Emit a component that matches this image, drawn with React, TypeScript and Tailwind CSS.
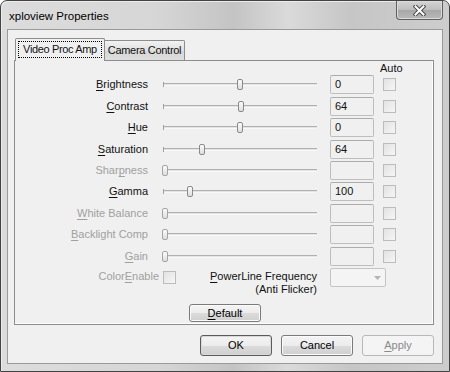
import React from "react";

type Row = { label: string; u: number; value: string; thumb: number; enabled: boolean; h: string };

const rows: Row[] = [
  { label: "Brightness", u: 0, value: "0", thumb: 77, enabled: true, h: "h-[21px]" },
  { label: "Contrast", u: 0, value: "64", thumb: 78, enabled: true, h: "h-[22px]" },
  { label: "Hue", u: 0, value: "0", thumb: 77, enabled: true, h: "h-[21px]" },
  { label: "Saturation", u: 0, value: "64", thumb: 39, enabled: true, h: "h-[22px]" },
  { label: "Sharpness", u: 4, value: "", thumb: 2, enabled: false, h: "h-[21px]" },
  { label: "Gamma", u: 0, value: "100", thumb: 27, enabled: true, h: "h-[21px]" },
  { label: "White Balance", u: 0, value: "", thumb: 2, enabled: false, h: "h-[22px]" },
  { label: "Backlight Comp", u: 0, value: "", thumb: 2, enabled: false, h: "h-[21px]" },
  { label: "Gain", u: 0, value: "", thumb: 2, enabled: false, h: "h-[22px]" },
];

function U({ text, i }: { text: string; i: number }) {
  return (
    <>
      {text.slice(0, i)}
      <span className="underline underline-offset-[2px]">{text[i]}</span>
      {text.slice(i + 1)}
    </>
  );
}

function Checkbox() {
  return (
    <div className="w-[13px] h-[13px] border border-[#bcbcbc] bg-[linear-gradient(135deg,#e2e2e2,#f6f6f6)] shrink-0" />
  );
}

function Slider({ thumb, enabled }: { thumb: number; enabled: boolean }) {
  return (
    <div className="relative w-[154px] h-[21px] shrink-0">
      <div className="absolute left-0 right-0 top-[9px] h-[3px] border-t border-[#b0b0b0] bg-[#e4e4e4] border-b border-b-[#f8f8f8]" />
      <div className="absolute left-0 top-[8px] w-[1px] h-[5px] bg-[#a0a0a0]" />
      <div
        className={
          "absolute top-[5px] w-[6px] h-[11px] rounded-[2px] border bg-[linear-gradient(to_bottom,#fbfbfb,#dedede)] " +
          (enabled ? "border-[#8a8a8a]" : "border-[#a4a4a4]")
        }
        style={{ left: thumb - 3 }}
      />
    </div>
  );
}

function WinButton({ children, primary, disabled, className = "" }: { children: React.ReactNode; primary?: boolean; disabled?: boolean; className?: string }) {
  return (
    <div
      className={
        "flex items-center justify-center rounded-[3px] border " +
        (disabled
          ? "border-[#b8b8b8] bg-[#f4f4f4] text-[#8a8a8a] "
          : primary
          ? "border-[#5c5c5c] bg-[linear-gradient(to_bottom,#f4f4f4_0%,#ececec_50%,#dcdcdc_51%,#cfcfcf_100%)] text-black shadow-[inset_0_0_0_1px_#d8d8d8] "
          : "border-[#7a7a7a] bg-[linear-gradient(to_bottom,#f4f4f4_0%,#ececec_50%,#dcdcdc_51%,#cfcfcf_100%)] text-black shadow-[inset_0_0_0_1px_#fbfbfb] ") +
        className
      }
    >
      {children}
    </div>
  );
}

export default function App() {
  return (
    <div
      className="w-[450px] h-[372px] overflow-hidden bg-white text-[11px] leading-[13px]"
      style={{ fontFamily: '"Liberation Sans", Arial, sans-serif' }}
    >
      <div className="w-[450px] h-[372px] flex flex-col rounded-t-[7px] border border-[#434343] bg-[linear-gradient(to_right,#dcdcdc_0%,#d6d6d6_35%,#c4c4c4_52%,#dadada_64%,#c6c6c6_78%,#cdcdcd_100%)] shadow-[inset_1px_1px_0_#ececec]">
        {/* title bar */}
        <div className="relative h-[28px] flex items-center pl-[8px] pt-[2px] shrink-0">
          <span className="text-[11.5px] text-black">xploview Properties</span>
          <div className="absolute right-[6px] top-0 w-[47px] h-[19px] rounded-b-[4px] border border-t-0 border-[#5f5f5f] bg-[linear-gradient(to_bottom,#d4d4d4_0%,#bdbdbd_50%,#a8a8a8_51%,#b8b8b8_100%)] shadow-[inset_0_0_0_1px_#dcdcdc] flex items-center justify-center">
            <svg width="13" height="11" viewBox="0 0 13 11">
              <path d="M2.5 1.5 L10.5 9.5 M10.5 1.5 L2.5 9.5" stroke="#4a4a4a" strokeWidth="4" strokeLinecap="square" />
              <path d="M2.5 1.5 L10.5 9.5 M10.5 1.5 L2.5 9.5" stroke="#ffffff" strokeWidth="2" strokeLinecap="square" />
            </svg>
          </div>
        </div>
        {/* client */}
        <div className="mx-[6px] mb-[7px] h-[335px] border border-[#9a9a9a] bg-[#f0f0f0] flex flex-col text-[#111]">
          {/* tabs */}
          <div className="pt-[8px] pl-[6px] pr-[8px] flex flex-col">
            <div className="flex items-end h-[22px] relative z-10">
              <div className="ml-[1px] w-[90px] h-[23px] -mb-[1px] border border-b-0 border-[#8d8d8d] rounded-t-[2px] bg-[#f0f0f0] flex items-start justify-center pt-[2px]">
                <div className="w-[84px] h-[17px] border border-dotted border-black flex items-center justify-center tracking-[-0.35px]">
                  Video Proc Amp
                </div>
              </div>
              <div className="w-[80px] h-[20px] border border-l-0 border-b-0 border-[#8d8d8d] rounded-tr-[2px] bg-[linear-gradient(to_bottom,#f2f2f2,#e0e0e0_50%,#d6d6d6_51%,#dedede)] flex items-center justify-center tracking-[-0.3px]">
                Camera Control
              </div>
            </div>
            {/* panel */}
            <div className="w-[420px] h-[265px] border border-[#8d8d8d] bg-[#f0f0f0] shadow-[inset_-1px_-1px_0_#ffffff] flex flex-col">
              <div className="h-[13px] pl-[365px] pt-[1px]">Auto</div>
              {rows.map((r) => (
                <div key={r.label} className={"flex items-center " + r.h}>
                  <div className={"w-[133px] text-right shrink-0 " + (r.enabled ? "text-[#111]" : "text-[#a0a0a0]")}>
                    <U text={r.label} i={r.u} />
                  </div>
                  <div className="ml-[15px]">
                    <Slider thumb={r.thumb} enabled={r.enabled} />
                  </div>
                  <div className="ml-[13px] w-[44px] h-[19px] rounded-[2px] border border-[#bdbdbd] border-t-[#acacac] bg-[#f0f0f0] pl-[4px] flex items-center shrink-0">
                    {r.value}
                  </div>
                  <div className="ml-[9px]">
                    <Checkbox />
                  </div>
                </div>
              ))}
              <div className="flex items-start mt-[1px]">
                <div className="w-[144px] text-right mt-[2px] text-[#a0a0a0] shrink-0">
                  <U text="ColorEnable" i={5} />
                </div>
                <div className="ml-[4px] mt-[3px]">
                  <Checkbox />
                </div>
                <div className="ml-[33px] w-[108px] text-right mt-[2px] leading-[13px] shrink-0">
                  <div>
                    <U text="PowerLine Frequency" i={0} />
                  </div>
                  <div>(Anti Flicker)</div>
                </div>
                <div className="ml-[13px] w-[56px] h-[19px] border border-[#c4c4c4] bg-[#f4f4f4] rounded-[2px] relative shrink-0">
                  <svg className="absolute right-[4px] top-[7px]" width="7" height="4" viewBox="0 0 7 4">
                    <path d="M0 0 L7 0 L3.5 4 Z" fill="#b4b4b4" />
                  </svg>
                </div>
              </div>
              <div className="mt-[8px] ml-[174px]">
                <WinButton className="w-[72px] h-[18px]">
                  <U text="Default" i={0} />
                </WinButton>
              </div>
            </div>
          </div>
          {/* buttons */}
          <div className="flex justify-end gap-[9px] pr-[8px] mt-[10px]">
            <WinButton primary className="w-[72px] h-[21px]">OK</WinButton>
            <WinButton className="w-[72px] h-[21px]">Cancel</WinButton>
            <WinButton disabled className="w-[72px] h-[21px]">
              <U text="Apply" i={0} />
            </WinButton>
          </div>
        </div>
      </div>
    </div>
  );
}
